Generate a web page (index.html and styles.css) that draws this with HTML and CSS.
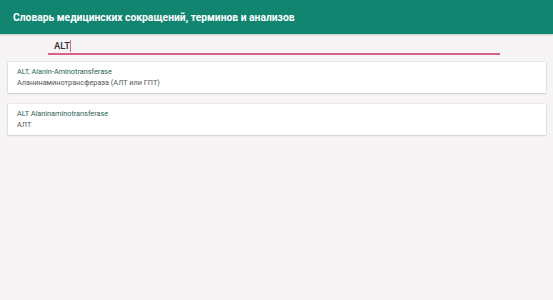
FILE: index.html
```html
<!DOCTYPE html>
<html lang="ru">
<head>
<meta charset="utf-8">
<title>Словарь</title>
<link rel="stylesheet" href="styles.css">
</head>
<body>
<header class="appbar">
  <h1 class="appbar-title">Словарь медицинских сокращений, терминов и анализов</h1>
</header>
<div class="search">
  <div class="search-field"><span class="search-text">ALT</span><span class="caret"></span></div>
</div>
<ul class="results">
  <li class="card">
    <div class="card-title">ALT, Alanin-Aminotransferase</div>
    <div class="card-sub">Аланинаминотрансфераза (АЛТ или ГПТ)</div>
  </li>
  <li class="card">
    <div class="card-title">ALT Alaninaminotransferase</div>
    <div class="card-sub">АЛТ</div>
  </li>
</ul>
</body>
</html>
```
FILE: styles.css
```css
html, body {
  margin: 0;
  padding: 0;
  height: 100%;
}
body {
  background: #f6f4f5;
  font-family: Roboto, "Noto Sans", sans-serif;
}
.appbar {
  height: 34px;
  background: #11856f;
  display: flex;
  align-items: center;
  padding-left: 13px;
  box-shadow: 0 1px 2px rgba(0,0,0,0.2);
}
.appbar-title {
  margin: 0;
  color: #ffffff;
  font-size: 10.3px;
  font-weight: 700;
}
.search {
  padding: 4px 53px 0 48px;
}
.search-field {
  height: 14px;
  border-bottom: 2px solid #d8628c;
  display: flex;
  align-items: flex-end;
  padding-left: 6px;
  padding-bottom: 1px;
}
.search-text {
  font-size: 9.5px;
  font-weight: 500;
  color: #333;
  line-height: 12px;
}
.caret {
  width: 1px;
  height: 12px;
  background: #d8628c;
}
.results {
  list-style: none;
  margin: 7px 7px 0 8px;
  padding: 0;
  display: flex;
  flex-direction: column;
  gap: 11px;
}
.card {
  background: #ffffff;
  height: 31px;
  box-shadow: 0 0 1px rgba(0,0,0,0.25), 0 1px 2px rgba(0,0,0,0.12);
  padding: 4px 0 0 9px;
  box-sizing: border-box;
}
.card-title {
  font-size: 7.3px;
  color: #2b5f52;
  line-height: 11px;
}
.card-sub {
  font-size: 7.3px;
  color: #555;
  line-height: 12px;
}
```
